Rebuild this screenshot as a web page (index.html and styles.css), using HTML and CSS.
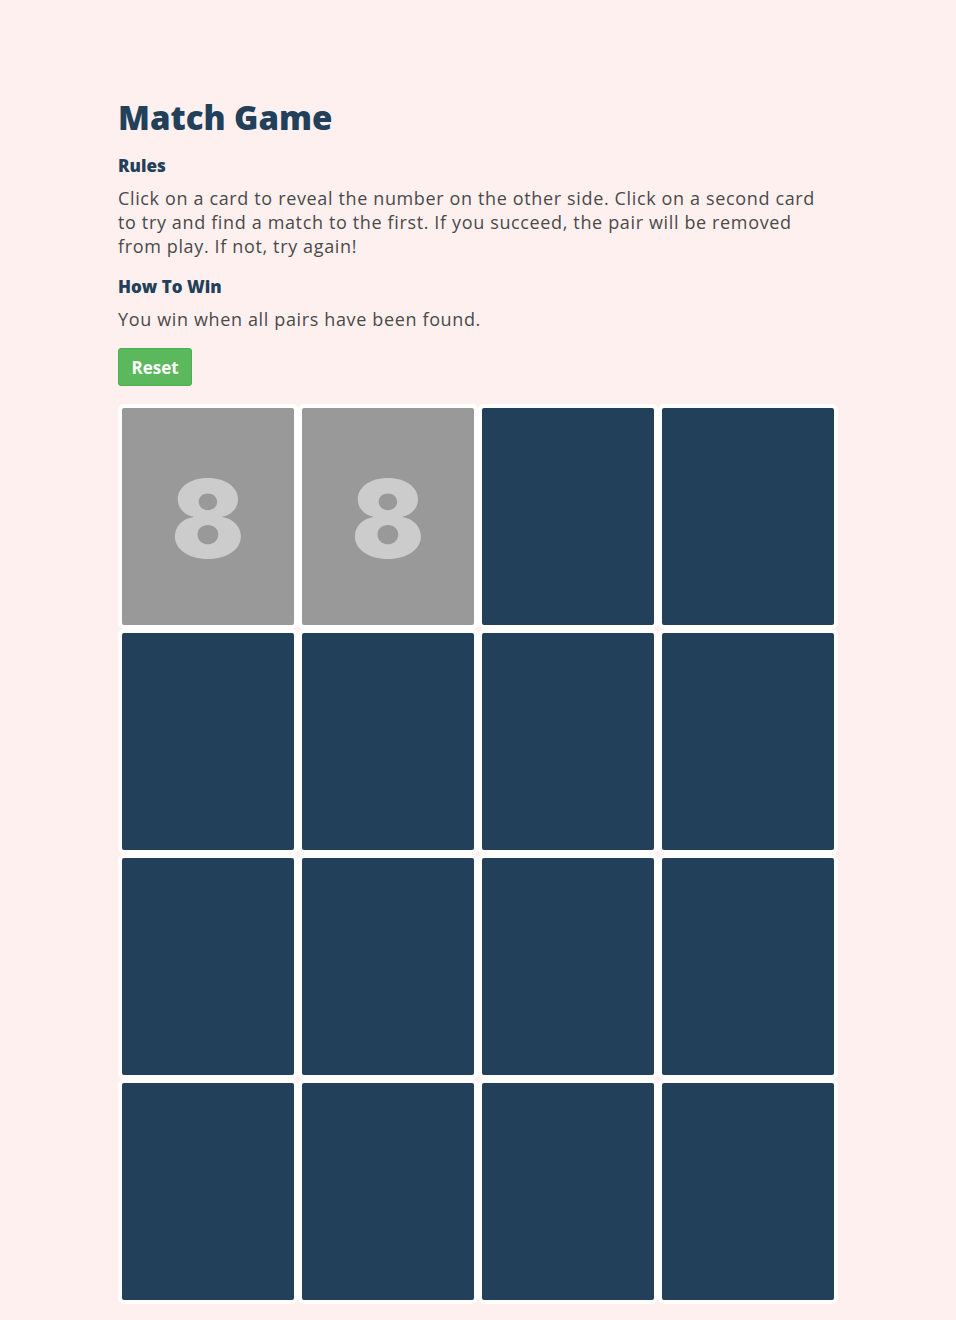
FILE: index.html
```html
<!DOCTYPE html>
<html>
<head>
<meta charset="utf-8">
<title>Match Game</title>
<link rel="stylesheet" href="styles.css">
</head>
<body>
<main class="page">
  <h1 class="title">Match Game</h1>
  <h2 class="subtitle">Rules</h2>
  <p class="text">Click on a card to reveal the number on the other side. Click on a second card to try and find a match to the first. If you succeed, the pair will be removed from play. If not, try again!</p>
  <h2 class="subtitle">How To Win</h2>
  <p class="text">You win when all pairs have been found.</p>
  <button class="reset">Reset</button>
  <div class="board">
    <div class="card flipped"><span class="num">8</span></div>
    <div class="card flipped"><span class="num">8</span></div>
    <div class="card"></div>
    <div class="card"></div>
    <div class="card"></div>
    <div class="card"></div>
    <div class="card"></div>
    <div class="card"></div>
    <div class="card"></div>
    <div class="card"></div>
    <div class="card"></div>
    <div class="card"></div>
    <div class="card"></div>
    <div class="card"></div>
    <div class="card"></div>
    <div class="card"></div>
  </div>
</main>
</body>
</html>
```

FILE: styles.css
```css
html, body {
  margin: 0;
  padding: 0;
  background: #fff0f0;
}

body {
  font-family: "Open Sans", "DejaVu Sans", sans-serif;
  color: #4a4a4a;
}

.page {
  width: 720px;
  margin: 0 auto;
  padding-top: 96px;
}

.title {
  margin: 0;
  font-size: 33px;
  line-height: 44px;
  font-weight: 800;
  color: #22405a;
}

.subtitle {
  margin: 14px 0 0;
  font-size: 17px;
  line-height: 24px;
  font-weight: 800;
  color: #22405a;
}

.text + .subtitle {
  margin-top: 17px;
}

.text {
  margin: 8px 0 0;
  font-size: 18px;
  line-height: 24px;
  letter-spacing: 0.64px;
}

.reset {
  display: block;
  margin: 17px 0 18px;
  width: 74px;
  height: 38px;
  padding: 0;
  font-family: "Open Sans", "DejaVu Sans", sans-serif;
  font-size: 17px;
  font-weight: 700;
  color: #fff;
  background: #5cb85c;
  border: 1px solid #4cae4c;
  border-radius: 3px;
}

.board {
  display: grid;
  grid-template-columns: repeat(4, 180px);
  grid-auto-rows: 225px;
}

.card {
  box-sizing: border-box;
  border: 4px solid #fff;
  border-radius: 6px;
  background: #22405a;
  display: flex;
  align-items: center;
  justify-content: center;
}

.card.flipped {
  background: #999;
}

.num {
  font-family: "Inter", "Roboto", sans-serif;
  font-weight: 900;
  font-size: 108px;
  line-height: 1;
  color: #ccc;
  padding-top: 4px;
}
```
